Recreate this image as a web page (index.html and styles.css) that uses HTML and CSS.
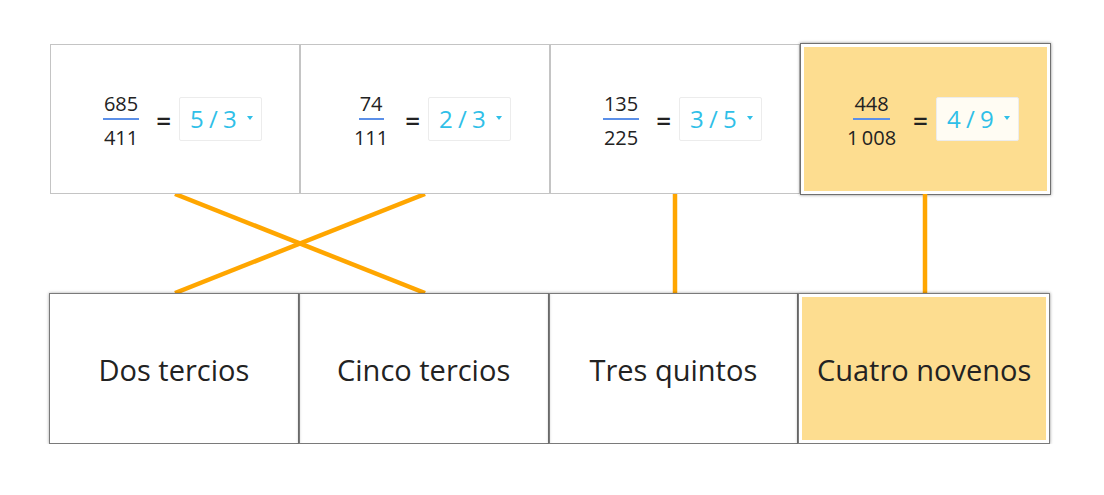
FILE: index.html
```html
<!DOCTYPE html>
<html lang="es">
<head>
  <meta charset="UTF-8">
  <title>Fracciones</title>
  <link rel="stylesheet" href="styles.css">
</head>
<body>
  <div class="board">
    <div class="row top-row">
      <div class="card">
        <div class="frac"><span class="num">685</span><span class="den">411</span></div>
        <span class="eq">=</span>
        <div class="pick">5 / 3<span class="caret"></span></div>
      </div>
      <div class="card">
        <div class="frac"><span class="num">74</span><span class="den">111</span></div>
        <span class="eq">=</span>
        <div class="pick">2 / 3<span class="caret"></span></div>
      </div>
      <div class="card">
        <div class="frac"><span class="num">135</span><span class="den">225</span></div>
        <span class="eq">=</span>
        <div class="pick">3 / 5<span class="caret"></span></div>
      </div>
      <div class="card selected">
        <div class="frac"><span class="num">448</span><span class="den">1&#8201;008</span></div>
        <span class="eq">=</span>
        <div class="pick">4 / 9<span class="caret"></span></div>
      </div>
    </div>
    <svg class="links" width="1000" height="99" viewBox="0 0 1000 99">
      <line x1="125" y1="0" x2="375" y2="99" />
      <line x1="375" y1="0" x2="125" y2="99" />
      <line x1="625" y1="0" x2="625" y2="99" />
      <line x1="875" y1="0" x2="875" y2="99" />
    </svg>
    <div class="row bottom-row">
      <div class="label">Dos tercios</div>
      <div class="label">Cinco tercios</div>
      <div class="label">Tres quintos</div>
      <div class="label selected">Cuatro novenos</div>
    </div>
  </div>
</body>
</html>
```

FILE: styles.css
```css
body {
  margin: 0;
  background: #fff;
  color: #222;
  font-family: "Open Sans", "Noto Sans", sans-serif;
}
.board {
  padding: 44px 0 0 50px;
  width: 1000px;
}
.row {
  display: flex;
}
.card {
  width: 250px;
  height: 150px;
  box-sizing: border-box;
  border: 1px solid #c4c4c4;
  display: flex;
  align-items: center;
  justify-content: center;
  padding-left: 15px;
}
.card.selected {
  border-color: #707070;
  background: #fddd90;
  box-shadow: inset 0 0 0 3px #fff, 0 0 3px rgba(0,0,0,0.45);
  margin: -1px -1px -1px 0;
  width: 251px;
  height: 152px;
}
.frac {
  display: flex;
  flex-direction: column;
  align-items: center;
  font-size: 20px;
  line-height: 26px;
}
.num {
  margin-top: 3px;
  padding: 0 1px 1px;
  border-bottom: 2px solid #5b8fe8;
}
.den {
  padding-top: 5px;
}
.eq {
  font-size: 26px;
  font-weight: 600;
  margin: 2px 8px 0 17px;
}
.pick {
  position: relative;
  width: 83px;
  height: 44px;
  box-sizing: border-box;
  border: 1px solid #ececec;
  border-radius: 2px;
  background: #fff;
  color: #2fbfe8;
  font-size: 24px;
  word-spacing: -1px;
  line-height: 42px;
  padding-left: 10px;
}
.selected .pick {
  background: #fffcf3;
}
.caret {
  position: absolute;
  right: 8px;
  top: 18px;
  width: 0;
  height: 0;
  border-left: 3px solid transparent;
  border-right: 3px solid transparent;
  border-top: 4px solid #2fbfe8;
}
.links {
  display: block;
}
.links line {
  stroke: #ffa600;
  stroke-width: 4.5;
}
.bottom-row {
  margin-left: -1px;
}
.label {
  width: 250px;
  height: 151px;
  box-sizing: border-box;
  border: 1px solid #7a7a7a;
  box-shadow: 0 0 3px rgba(0,0,0,0.35);
  display: flex;
  align-items: center;
  justify-content: center;
  padding-top: 2px;
  font-size: 29px;
  color: #222;
}
.label.selected {
  width: 252px;
  background: #fddd90;
  box-shadow: inset 0 0 0 3px #fff, 0 0 3px rgba(0,0,0,0.45);
}
```
